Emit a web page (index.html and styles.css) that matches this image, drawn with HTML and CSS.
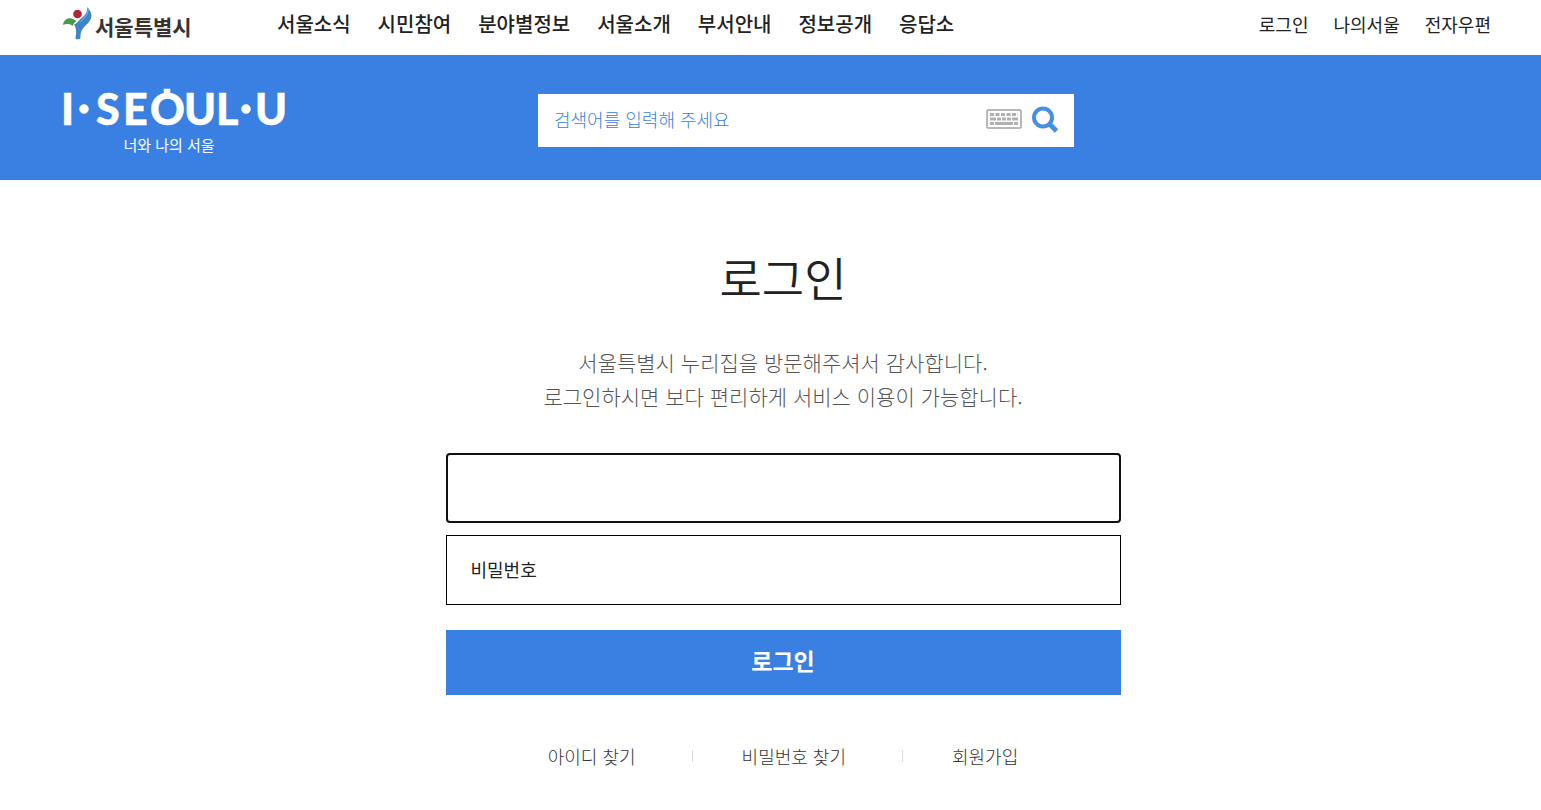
FILE: index.html
```html
<!DOCTYPE html>
<html lang="ko">

<head>
  <meta charset="UTF-8">
  <title>로그인</title>
  <link rel="stylesheet" href="styles.css">
</head>

<body>
  <div class="header">
    <a class="logo" href="#">
      <svg class="logo-mark" viewBox="0 0 31 33" width="31" height="33" aria-hidden="true">
        <path d="M1 18C2 11 9 9 14.500 14.500C12 15 11 17 11 19C8 16.500 4 16.500 1 18Z" fill="#469a48" />
        <circle cx="15.500" cy="7" r="4.300" fill="#b5233b" />
        <path d="M25 0C26 7 21 9.500 17.500 13C15.500 15 14.500 16.500 12 17.500C14.500 21 14.500 26 13.500 30.500C13.300 32.500 15.500 33 18.500 31.500C18 26 19.500 22 24 18C30 13 32 7 25 0Z" fill="#3c85c8" />
        <path d="M26 1C27 7 22.500 10.500 18.500 15" fill="none" stroke="#8db9df" stroke-width="1" />
      </svg>
      <span class="logo-text">서울특별시</span>
    </a>
    <ul class="nav">
      <li><a href="#">서울소식</a></li>
      <li><a href="#">시민참여</a></li>
      <li><a href="#">분야별정보</a></li>
      <li><a href="#">서울소개</a></li>
      <li><a href="#">부서안내</a></li>
      <li><a href="#">정보공개</a></li>
      <li><a href="#">응답소</a></li>
    </ul>
    <ul class="util">
      <li><a href="#">로그인</a></li>
      <li><a href="#">나의서울</a></li>
      <li><a href="#">전자우편</a></li>
    </ul>
  </div>

  <div class="banner">
    <a class="brand" href="#">
      <svg class="brand-logo" viewBox="-4 -8 236 54" width="236" height="54">
        <text x="-1" y="36">I</text>
        <circle cx="22" cy="20" r="4.500" />
        <text x="34 61 88 122 154" y="36">SEOUL</text>
        <rect x="102" y="0" width="6" height="8" />
        <circle cx="184" cy="20" r="4.500" />
        <text x="193" y="36">U</text>
      </svg>
      <span class="brand-text">너와 나의 서울</span>
    </a>
    <form class="search">
      <input type="text" class="search-input" placeholder="검색어를 입력해 주세요" aria-label="검색어">
      <button type="button" class="icon-button" aria-label="가상 키보드">
        <svg viewBox="0 0 36 20" width="36" height="20">
          <rect x="1" y="1" width="34" height="18" rx="1" fill="#fff" stroke="#a3a3a3" stroke-width="1.500" />
          <g fill="none" stroke="#b0b0b0" stroke-width="3">
            <path d="M4 5.500H32" stroke-dasharray="4 1.500" />
            <path d="M4 10H32" stroke-dasharray="6 1 4 1 4 1 4 1 6" />
            <path d="M4 14.500H32" stroke-dasharray="4 1 18 1 4" />
          </g>
        </svg>
      </button>
      <button type="submit" class="icon-button" aria-label="검색">
        <svg viewBox="0 0 26 27" width="26" height="27">
          <circle cx="11" cy="11.500" r="9" fill="none" stroke="#4590e4" stroke-width="4" />
          <path d="M17 17.500L24.500 25" stroke="#4590e4" stroke-width="5" />
        </svg>
      </button>
    </form>
  </div>

  <div class="content">
    <h1 class="title">로그인</h1>
    <p class="desc">서울특별시 누리집을 방문해주셔서 감사합니다.<br>로그인하시면 보다 편리하게 서비스 이용이 가능합니다.</p>
    <form class="login">
      <div class="login-input login-input-on">
        <input type="text" aria-label="아이디">
      </div>
      <div class="login-input">
        <label for="password">비밀번호</label>
        <input type="password" id="password">
      </div>
      <button type="submit" class="login-button">로그인</button>
    </form>
    <ul class="links">
      <li><a href="#">아이디 찾기</a></li>
      <li><a href="#">비밀번호 찾기</a></li>
      <li><a href="#">회원가입</a></li>
    </ul>
  </div>
</body>

</html>
```
FILE: styles.css
```css
* {
  padding: 0;
  margin: 0;
  box-sizing: border-box;
}

body {
  background: #fff;
  color: #222;
  font-family: "Noto Sans CJK KR", sans-serif;
  font-size: 18px;
}

ul {
  list-style: none;
}

a {
  color: inherit;
  text-decoration: none;
}

input,
button {
  font-family: inherit;
  border: none;
  outline: none;
  background: none;
}

button {
  cursor: pointer;
}

/* 상단 메뉴 */
.header {
  display: flex;
  align-items: center;
  height: 55px;
  padding: 0 50px 8px 62px;
}

.logo {
  display: flex;
  align-items: center;
  width: 215px;
}

.logo-text {
  margin-left: 2px;
  padding-top: 4px;
  color: #3a3231;
  font-size: 21px;
  font-weight: 700;
  line-height: 30px;
}

.nav {
  display: flex;
  gap: 27px;
  font-size: 20px;
  font-weight: 500;
  white-space: nowrap;
}

.util {
  display: flex;
  gap: 25px;
  margin-left: auto;
  white-space: nowrap;
}

/* 검색 영역 */
.banner {
  display: flex;
  align-items: center;
  height: 125px;
  padding: 0 50px 0 58px;
  background: #3a80e3;
}

.brand {
  width: 480px;
  color: #fff;
}

.brand-logo {
  display: block;
  fill: #fff;
  stroke: #fff;
  stroke-width: 0.5;
  font-family: Lato, sans-serif;
  font-size: 43px;
  font-weight: 900;
}

.brand-text {
  display: block;
  width: 222px;
  font-size: 15px;
  line-height: 20px;
  text-align: center;
}

.search {
  display: flex;
  align-items: center;
  gap: 10px;
  width: 536px;
  height: 53px;
  margin-top: 6px;
  padding: 0 16px 3px;
  background: #fff;
}

.search-input {
  flex: 1;
  min-width: 0;
  height: 50px;
  font-size: 18px;
  font-weight: 300;
}

.search-input::placeholder {
  color: #3a80e3;
}

.icon-button svg {
  display: block;
}

/* 로그인 */
.content {
  padding: 58px 37px 0 62px;
  text-align: center;
}

.title {
  font-size: 46px;
  font-weight: 350;
  line-height: 76px;
}

.desc {
  margin-top: 31px;
  color: #555;
  font-size: 21px;
  font-weight: 300;
  line-height: 34px;
}

.login {
  max-width: 675px;
  margin: 40px auto 0;
}

.login-input {
  display: flex;
  align-items: center;
  height: 70px;
  margin-bottom: 12px;
  padding: 0 24px 2px;
  border: 1px solid #000;
}

.login-input-on {
  border: 2px solid #111;
  border-radius: 4px;
}

.login-input input {
  flex: 1;
  height: 100%;
  font-size: 18px;
}

.login-button {
  width: 100%;
  height: 65px;
  margin-top: 13px;
  padding-bottom: 5px;
  background: #3a80e3;
  color: #fff;
  font-size: 23px;
  font-weight: 700;
}

.links {
  display: flex;
  justify-content: center;
  margin-top: 48px;
  color: #333;
  font-weight: 300;
}

.links li {
  display: flex;
  align-items: center;
}

.links li + li::before {
  content: "";
  width: 1px;
  height: 12px;
  margin: 0 49px 0 56px;
  background: #ddd;
}
```
